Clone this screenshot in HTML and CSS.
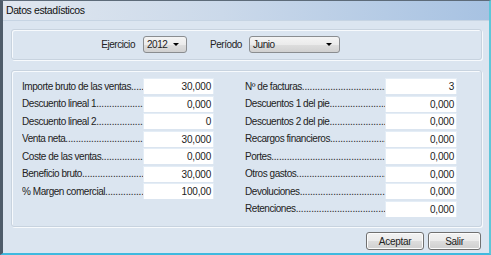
FILE: index.html
```html
<!DOCTYPE html>
<html lang="es">
<head>
    <meta charset="UTF-8">
    <title>Datos estadísticos</title>
    <link rel="stylesheet" href="styles.css">
</head>
<body>
    <div class="window">
        <div class="titlebar">Datos estadísticos</div>

        <div class="content">
            <!-- filtro -->
            <div class="group filter">
                <span class="filter-label first">Ejercicio</span>
                <div class="combo year">2012<span class="arrow"></span></div>
                <span class="filter-label second">Período</span>
                <div class="combo month">Junio<span class="arrow"></span></div>
            </div>

            <!-- datos -->
            <div class="group data">
                <div class="col left">
                    <div class="row"><span class="lbl">Importe bruto de las ventas</span><div class="val">30,000</div></div>
                    <div class="row"><span class="lbl">Descuento lineal 1</span><div class="val">0,000</div></div>
                    <div class="row"><span class="lbl">Descuento lineal 2</span><div class="val">0</div></div>
                    <div class="row"><span class="lbl">Venta neta</span><div class="val">30,000</div></div>
                    <div class="row"><span class="lbl">Coste de las ventas</span><div class="val">0,000</div></div>
                    <div class="row"><span class="lbl">Beneficio bruto</span><div class="val">30,000</div></div>
                    <div class="row"><span class="lbl">% Margen comercial</span><div class="val">100,00</div></div>
                </div>
                <div class="col right">
                    <div class="row"><span class="lbl">Nº de facturas</span><div class="val">3</div></div>
                    <div class="row"><span class="lbl">Descuentos 1 del pie</span><div class="val">0,000</div></div>
                    <div class="row"><span class="lbl">Descuentos 2 del pie</span><div class="val">0,000</div></div>
                    <div class="row"><span class="lbl">Recargos financieros</span><div class="val">0,000</div></div>
                    <div class="row"><span class="lbl">Portes</span><div class="val">0,000</div></div>
                    <div class="row"><span class="lbl">Otros gastos</span><div class="val">0,000</div></div>
                    <div class="row"><span class="lbl">Devoluciones</span><div class="val">0,000</div></div>
                    <div class="row"><span class="lbl">Retenciones</span><div class="val">0,000</div></div>
                </div>
            </div>

            <div class="actions">
                <button class="btn accept">Aceptar</button>
                <button class="btn exit">Salir</button>
            </div>
        </div>
    </div>
</body>
</html>
```

FILE: styles.css
```css
body {
    margin: 0;
    font-family: "Liberation Sans", Arial, sans-serif;
    font-size: 10px;
    letter-spacing: -0.45px;
    color: #222;
    background: #dbe5f0;
}

.window {
    width: 491px;
    height: 255px;
    box-sizing: border-box;
    border-top: 1px solid #5d6b79;
    border-left: 3px solid #4e5c6a;
    border-right: 2px solid #5fc6d9;
    border-bottom: 2px solid #3fb9df;
    background: #dbe5f0;
    display: flex;
    flex-direction: column;
}

.titlebar {
    height: 19px;
    line-height: 19px;
    padding-left: 3px;
    font-size: 10.5px;
    letter-spacing: -0.4px;
    color: #111;
    background: linear-gradient(to right, #e0e7ef 0%, #cbd9ea 45%, #a7c2e2 100%);
    border-bottom: 1px solid #c6d4e3;
}

.content {
    padding: 8px 7px 0 8px;
}

.group {
    border: 1px solid #c8d3df;
    border-radius: 3px;
    box-shadow: inset 1px 1px 0 #f7fafd, 1px 1px 0 #f7fafd;
    box-sizing: border-box;
}

/* filtro */
.filter {
    height: 31px;
    display: flex;
    align-items: center;
}

.filter-label {
    display: inline-block;
}

.filter-label.first {
    width: 131px;
    padding-right: 8px;
    text-align: right;
    box-sizing: border-box;
}

.filter-label.second {
    width: 62px;
    padding-left: 23px;
    box-sizing: border-box;
}

.combo {
    position: relative;
    height: 17px;
    line-height: 15px;
    box-sizing: border-box;
    border: 1px solid #8a8d90;
    border-radius: 3px;
    padding-left: 3px;
    background: linear-gradient(#f4f4f4 0%, #ebebeb 50%, #dedede 51%, #d1d1d1 100%);
}

.combo.year { width: 44px; }
.combo.month { width: 91px; }

.arrow {
    position: absolute;
    right: 7px;
    top: 6px;
    border-left: 3px solid transparent;
    border-right: 3px solid transparent;
    border-top: 3px solid #000;
}

/* datos */
.data {
    height: 157px;
    margin-top: 10px;
    padding: 7px 0 0 10px;
    display: flex;
}

.col {
    display: flex;
    flex-direction: column;
    gap: 1.5px;
}

.col.left { width: 223px; }

.row {
    display: flex;
    align-items: center;
    height: 16px;
}

.lbl {
    overflow: hidden;
    white-space: nowrap;
    box-sizing: border-box;
    padding-right: 7px;
}

.lbl::after {
    content: "..............................................................";
    letter-spacing: -0.2px;
}

.left .lbl { width: 121px; }
.right .lbl { width: 140px; }

.val {
    height: 16px;
    line-height: 16px;
    box-sizing: border-box;
    background: #fff;
    border: 1px solid #e4edf6;
    border-bottom: none;
    text-align: right;
    padding-right: 2px;
    letter-spacing: -0.2px;
}

.left .val { width: 71px; }
.right .val { width: 72px; }

/* botones */
.actions {
    display: flex;
    justify-content: flex-end;
    gap: 4px;
    margin-top: 5px;
    padding-right: 1px;
}

.btn {
    height: 18px;
    padding: 0;
    font-family: inherit;
    font-size: 10px;
    letter-spacing: -0.3px;
    color: #222;
    border: 1px solid #707070;
    border-radius: 3px;
    background: linear-gradient(#f2f2f2 0%, #ebebeb 50%, #dddddd 51%, #cfcfcf 100%);
    box-shadow: inset 0 0 0 1px #fcfcfc;
}

.btn.accept { width: 58px; }
.btn.exit { width: 53px; }
```
